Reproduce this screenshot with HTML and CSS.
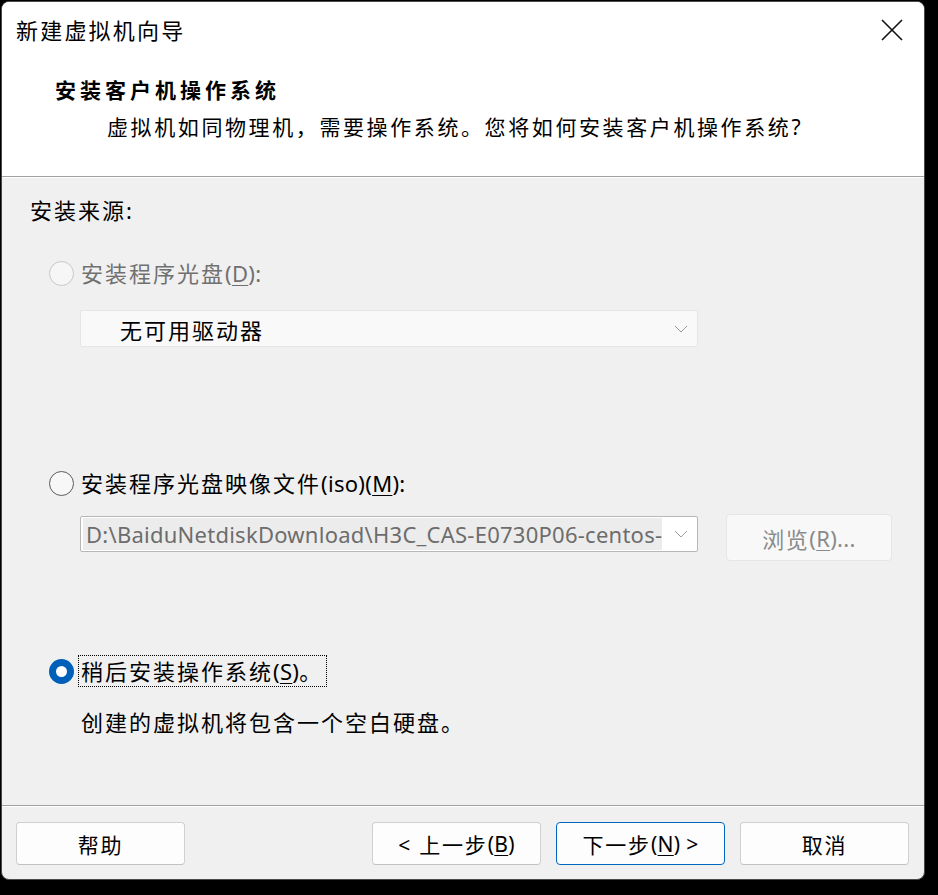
FILE: index.html
```html
<!DOCTYPE html>
<html lang="zh-CN">
<head>
<meta charset="utf-8">
<title>新建虚拟机向导</title>
<link rel="stylesheet" href="styles.css">
</head>
<body>
<div class="window">
  <div class="header">
    <div class="titlebar">
      <span class="title">新建虚拟机向导</span>
      <span class="close"><svg width="22" height="22" viewBox="0 0 22 22"><path d="M1 1 L21 21 M21 1 L1 21" stroke="#111" stroke-width="1.6" fill="none"/></svg></span>
    </div>
    <div class="heading">安装客户机操作系统</div>
    <div class="subtitle">虚拟机如同物理机，需要操作系统。您将如何安装客户机操作系统<span class="q">?</span></div>
  </div>
  <div class="sep"></div>
  <div class="content">
    <div class="label">安装来源:</div>
    <div class="radio-row r1 disabled">
      <span class="radio"></span>
      <span class="rlabel">安装程序光盘<span class="lat">(<u>D</u>):</span></span>
    </div>
    <div class="select dis-select">
      <span class="select-text">无可用驱动器</span>
      <svg class="chev" width="14" height="8" viewBox="0 0 14 8"><path d="M1 1 L7 7 L13 1" stroke="#9a9a9a" stroke-width="1" fill="none"/></svg>
    </div>
    <div class="radio-row r2">
      <span class="radio"></span>
      <span class="rlabel">安装程序光盘映像文件<span class="lat">(iso)(<u>M</u>):</span></span>
    </div>
    <div class="iso-row">
      <div class="select combo">
        <span class="combo-text">D:\BaiduNetdiskDownload\H3C_CAS-E0730P06-centos-</span>
        <svg class="chev" width="14" height="8" viewBox="0 0 14 8"><path d="M1 1 L7 7 L13 1" stroke="#a0a0a0" stroke-width="1" fill="none"/></svg>
      </div>
      <div class="browse">浏览<span class="lat">(<u>R</u>)...</span></div>
    </div>
    <div class="radio-row r3">
      <span class="radio checked"></span>
      <span class="rlabel focus">稍后安装操作系统<span class="lat">(<u>S</u>)</span>。</span>
    </div>
    <div class="desc">创建的虚拟机将包含一个空白硬盘。</div>
  </div>
  <div class="sep"></div>
  <div class="footer">
    <div class="btn">帮助</div>
    <div class="spacer"></div>
    <div class="btn">&lt; 上一步<span class="lat">(<u>B</u>)</span></div>
    <div class="btn primary">下一步<span class="lat">(<u>N</u>) &gt;</span></div>
    <div class="btn">取消</div>
  </div>
</div>
</body>
</html>
```

FILE: styles.css
```css
* { box-sizing: border-box; }
html, body { margin: 0; padding: 0; }
body {
  background: #000;
  width: 938px;
  height: 895px;
  overflow: hidden;
  font-family: "Noto Sans", "Noto Sans CJK SC", sans-serif;
  color: #000;
}
u { text-decoration: underline; text-underline-offset: 3px; text-decoration-thickness: 1px; }
.lat { font-size: 22px; letter-spacing: 0.3px; }

.window {
  margin: 1px 0 0 1px;
  width: 924px;
  height: 879px;
  border: 1px solid #4a4a4a;
  border-radius: 8px;
  overflow: hidden;
  display: flex;
  flex-direction: column;
  background: #f0f0f0;
}

.header {
  background: #fff;
  height: 174px;
  padding-top: 12px;
}
.titlebar {
  display: flex;
  align-items: center;
  justify-content: space-between;
  padding: 0 21px 0 14px;
  height: 30px;
}
.title {
  font-family: "Noto Sans CJK SC", sans-serif;
  font-size: 22px;
  letter-spacing: 2.2px;
  line-height: 30px;
}
.close { display: flex; margin-top: 2px; }
.heading {
  font-family: "Noto Sans CJK SC", sans-serif;
  font-weight: bold;
  font-size: 21px;
  letter-spacing: 4px;
  line-height: 30px;
  margin-top: 30px;
  padding-left: 53px;
}
.subtitle {
  font-family: "Noto Sans CJK SC", sans-serif;
  font-size: 21px;
  letter-spacing: 2.6px;
  line-height: 30px;
  margin-top: 7px;
  padding-left: 105px;
}
.subtitle .q { font-family: "Noto Sans", sans-serif; letter-spacing: 0; }

.sep { height: 2px; background: #a0a0a0; border-bottom: 1px solid #fff; }

.content {
  flex: 1;
  padding: 17px 0 0 28px;
  font-size: 22px;
}
.label, .rlabel, .desc {
  line-height: 30px;
  letter-spacing: 2px;
}
.radio-row {
  display: flex;
  align-items: center;
  height: 30px;
  margin-left: 19px;
}
.r1 { margin-top: 33px; }
.r2 { margin-top: 121px; }
.r3 { margin-top: 95px; }
.radio {
  width: 25px;
  height: 25px;
  border-radius: 50%;
  border: 1.5px solid #5c5c5c;
  background: #f7f7f7;
  margin-right: 7px;
  flex: none;
}
.disabled .radio { border-color: #c8c8c8; background: #f6f6f6; }
.disabled .rlabel { color: #707070; }
.radio.checked {
  border: 7px solid #005fb8;
  background: #fff;
}
.rlabel.focus {
  outline: 1px dotted #000;
  outline-offset: 0;
  margin-left: -2px;
  padding-left: 2px;
  padding-right: 3px;
}

.select {
  margin: 22px 0 0 50px;
  width: 618px;
  height: 37px;
  display: flex;
  align-items: center;
  justify-content: space-between;
  padding-right: 9px;
}
.dis-select {
  background: #f9f9f9;
  border: 1px solid #e6e6e6;
  border-radius: 2px;
  padding-left: 39px;
}
.select-text { letter-spacing: 2px; }

.iso-row {
  display: flex;
  align-items: flex-start;
  margin-top: 16px;
}
.combo {
  margin: 2px 0 0 50px;
  height: 36px;
  background: #fff;
  border: 1px solid #b7b7b7;
  border-radius: 2px;
  padding-left: 2px;
}
.combo-text {
  width: 579px;
  overflow: hidden;
  white-space: nowrap;
  background: #ececec;
  color: #6d6d6d;
  font-size: 22px;
  line-height: 32px;
  padding-left: 3px;
  letter-spacing: 0.25px;
  flex: none;
}
.browse {
  margin-left: 28px;
  width: 166px;
  height: 47px;
  border: 1px solid #e5e5e5;
  border-radius: 4px;
  background: #f8f8f8;
  color: #8a8a8a;
  display: flex;
  align-items: center;
  justify-content: center;
  letter-spacing: 1.5px;
  font-size: 22px;
}

.desc { margin: 21px 0 0 51px; }

.footer {
  height: 72px;
  display: flex;
  padding: 15px 15px 0 14px;
  gap: 15px;
  align-items: flex-start;
}
.spacer { flex: 1; }
.btn {
  width: 169px;
  height: 43px;
  border: 1px solid #d0d0d0;
  border-bottom-color: #c2c2c2;
  border-radius: 4px;
  background: #fdfdfd;
  display: flex;
  align-items: center;
  justify-content: center;
  font-size: 21px;
  letter-spacing: 1.8px;
  white-space: pre;
}
.btn .lat { font-size: 21px; }
.btn.primary { border: 1px solid #0067c0; }
```
